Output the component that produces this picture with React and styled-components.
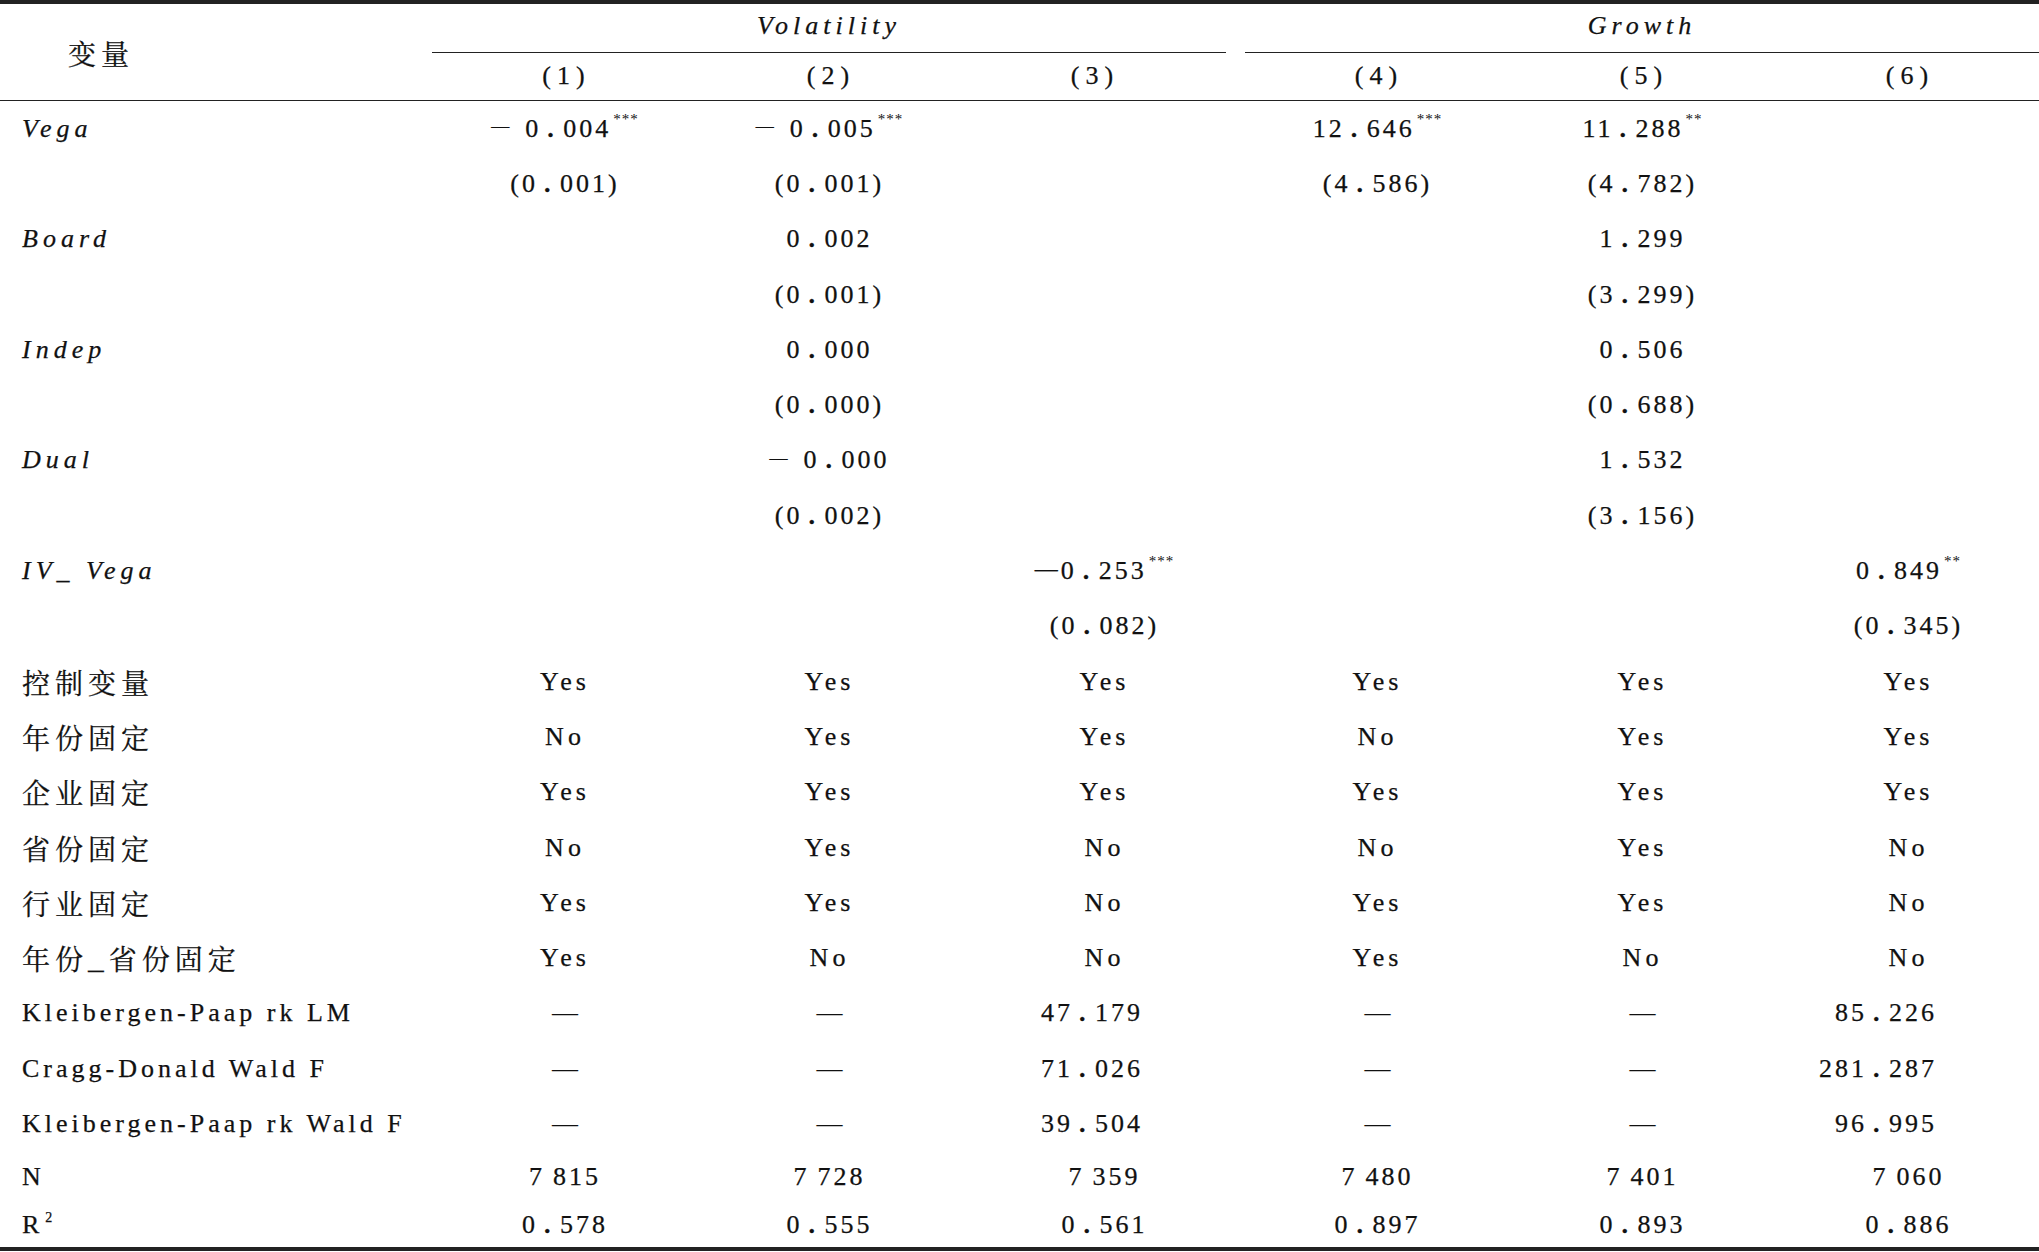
import React from "react";
import styled, { createGlobalStyle } from "styled-components";

const Global = createGlobalStyle`
  html, body { margin: 0; padding: 0; background: #fff; }
  body { width: 2039px; height: 1252px; overflow: hidden; color: #111; }
`;

const COLS = "432px 263px 266px 284px 262px 268px 264px";
const LINE = "#222";
const SERIF = `"Liberation Serif", "Times New Roman", serif`;
const CJK = `"Noto Serif CJK SC", "Source Han Serif SC", "Noto Sans CJK SC", serif`;

const Table = styled.div`
  width: 2039px;
  border-top: 4px solid ${LINE};
  border-bottom: 4px solid ${LINE};
  font-family: ${SERIF};
  font-size: 26px;
  color: #111;
  -webkit-text-stroke: 0.25px #111;
`;

const Head = styled.div`
  display: grid;
  grid-template-columns: ${COLS};
  grid-template-rows: 48.5px 47.5px;
  border-bottom: 1.5px solid ${LINE};
`;

const HeadLabel = styled.div`
  grid-column: 1;
  grid-row: 1 / span 2;
  display: flex;
  align-items: center;
  padding-left: 68px;
  font-family: ${CJK};
  font-size: 28px;
  letter-spacing: 5px;
  padding-top: 2px;
`;

const Group = styled.div`
  grid-row: 1;
  grid-column: ${(p) => p.$col} / span 3;
  margin-right: ${(p) => p.$gap || 0}px;
  border-bottom: 1.5px solid ${LINE};
  display: flex;
  align-items: center;
  justify-content: center;
  font-style: italic;
  letter-spacing: 5px;
  font-size: 26px;
  padding-bottom: 3px;
`;

const ColNum = styled.div`
  grid-row: 2;
  grid-column: ${(p) => p.$col};
  display: flex;
  align-items: center;
  justify-content: center;
  padding-right: ${(p) => p.$shift || 0}px;
  letter-spacing: 6px;
  font-size: 26px;
  & > span { margin-right: -6px; }
`;

const Row = styled.div`
  display: grid;
  grid-template-columns: ${COLS};
  height: ${(p) => p.$h}px;
  align-items: center;
`;

const Label = styled.div`
  padding-left: 22px;
  white-space: nowrap;
  font-style: ${(p) => (p.$italic ? "italic" : "normal")};
  letter-spacing: ${(p) => (p.$italic ? 5 : p.$cjk ? 5 : 4)}px;
  font-family: ${(p) => (p.$cjk ? CJK : SERIF)};
  font-size: ${(p) => (p.$cjk ? 28 : 26)}px;
`;

const Cell = styled.div`
  white-space: nowrap;
  text-align: ${(p) => (p.$right ? "right" : "center")};
  padding-right: ${(p) => (p.$right ? 102 : 0)}px;
  padding-left: ${(p) => (p.$right ? 0 : 3)}px;
  letter-spacing: 3px;
`;

const Word = styled.span`
  letter-spacing: 4px;
`;

const Minus = styled.span`
  font-size: ${(p) => (p.$wide ? 18 : 23)}px;
  line-height: 0;
  vertical-align: ${(p) => (p.$wide ? 4.5 : 3.5)}px;
  margin-right: ${(p) => (p.$wide ? 16 : 3)}px;
  letter-spacing: 0;
`;

const Dot = styled.span`
  display: inline-block;
  width: 22px;
  padding-left: 6px;
  box-sizing: border-box;
  text-align: left;
  letter-spacing: 0;
  font-weight: bold;
`;

const Stars = styled.span`
  font-size: 15px;
  line-height: 0;
  vertical-align: 13px;
  letter-spacing: 1px;
  margin-left: 2px;
  -webkit-text-stroke: 0;
`;

const Sup = styled.span`
  font-size: 14px;
  line-height: 0;
  vertical-align: 11px;
  margin-left: 2px;
`;

const Dash = styled.span`
  letter-spacing: 0;
  -webkit-text-stroke: 0;
`;

function Num({ v }) {
  if (!v) return null;
  if (v === "—") return <Dash>—</Dash>;
  if (v === "Yes" || v === "No") return <Word>{v}</Word>;
  const [main, stars] = v.split("|");
  let s = main;
  let minus = null;
  if (s.startsWith("− ")) {
    minus = <Minus $wide>—</Minus>;
    s = s.slice(2);
  } else if (s.startsWith("−")) {
    minus = <Minus>—</Minus>;
    s = s.slice(1);
  }
  const parts = s.split(".");
  return (
    <>
      {minus}
      {parts[0]}
      {parts.length > 1 && (
        <>
          <Dot>.</Dot>
          {parts[1]}
        </>
      )}
      {stars && <Stars>{stars}</Stars>}
    </>
  );
}

const H = 55.3;

const rows = [
  { label: "Vega", italic: true, cells: ["− 0.004|***", "− 0.005|***", "", "12.646|***", "11.288|**", ""] },
  { cells: ["(0.001)", "(0.001)", "", "(4.586)", "(4.782)", ""] },
  { label: "Board", italic: true, cells: ["", "0.002", "", "", "1.299", ""] },
  { cells: ["", "(0.001)", "", "", "(3.299)", ""] },
  { label: "Indep", italic: true, cells: ["", "0.000", "", "", "0.506", ""] },
  { cells: ["", "(0.000)", "", "", "(0.688)", ""] },
  { label: "Dual", italic: true, cells: ["", "− 0.000", "", "", "1.532", ""] },
  { cells: ["", "(0.002)", "", "", "(3.156)", ""] },
  { label: "IV_ Vega", italic: true, cells: ["", "", "−0.253|***", "", "", "0.849|**"] },
  { cells: ["", "", "(0.082)", "", "", "(0.345)"] },
  { label: "控制变量", cjk: true, cells: ["Yes", "Yes", "Yes", "Yes", "Yes", "Yes"] },
  { label: "年份固定", cjk: true, cells: ["No", "Yes", "Yes", "No", "Yes", "Yes"] },
  { label: "企业固定", cjk: true, cells: ["Yes", "Yes", "Yes", "Yes", "Yes", "Yes"] },
  { label: "省份固定", cjk: true, cells: ["No", "Yes", "No", "No", "Yes", "No"] },
  { label: "行业固定", cjk: true, cells: ["Yes", "Yes", "No", "Yes", "Yes", "No"] },
  { label: "年份_省份固定", cjk: true, cells: ["Yes", "No", "No", "Yes", "No", "No"] },
  { label: "Kleibergen-Paap rk LM", right: true, cells: ["—", "—", "47.179", "—", "—", "85.226"] },
  { label: "Cragg-Donald Wald F", right: true, cells: ["—", "—", "71.026", "—", "—", "281.287"] },
  { label: "Kleibergen-Paap rk Wald F", right: true, cells: ["—", "—", "39.504", "—", "—", "96.995"] },
  { label: "N", h: 50, cells: ["7\u2009815", "7\u2009728", "7\u2009359", "7\u2009480", "7\u2009401", "7\u2009060"] },
  { label: "R", sup: "2", h: 45.8, cells: ["0.578", "0.555", "0.561", "0.897", "0.893", "0.886"] },
];

export default function App() {
  return (
    <>
      <Global />
      <Table>
        <Head>
          <HeadLabel>变量</HeadLabel>
          <Group $col={2} $gap={19}>Volatility</Group>
          <Group $col={5}>Growth</Group>
          {[1, 2, 3, 4, 5, 6].map((n) => (
            <ColNum key={n} $col={n + 1} $shift={n === 3 ? 22 : 0}>
              <span>({n})</span>
            </ColNum>
          ))}
        </Head>
        {rows.map((r, i) => (
          <Row key={i} $h={r.h || H}>
            <Label $italic={r.italic} $cjk={r.cjk}>
              {r.label || ""}
              {r.sup && <Sup>{r.sup}</Sup>}
            </Label>
            {r.cells.map((c, j) => (
              <Cell key={j} $right={r.right && c !== "—"}>
                <Num v={c} />
              </Cell>
            ))}
          </Row>
        ))}
      </Table>
    </>
  );
}
